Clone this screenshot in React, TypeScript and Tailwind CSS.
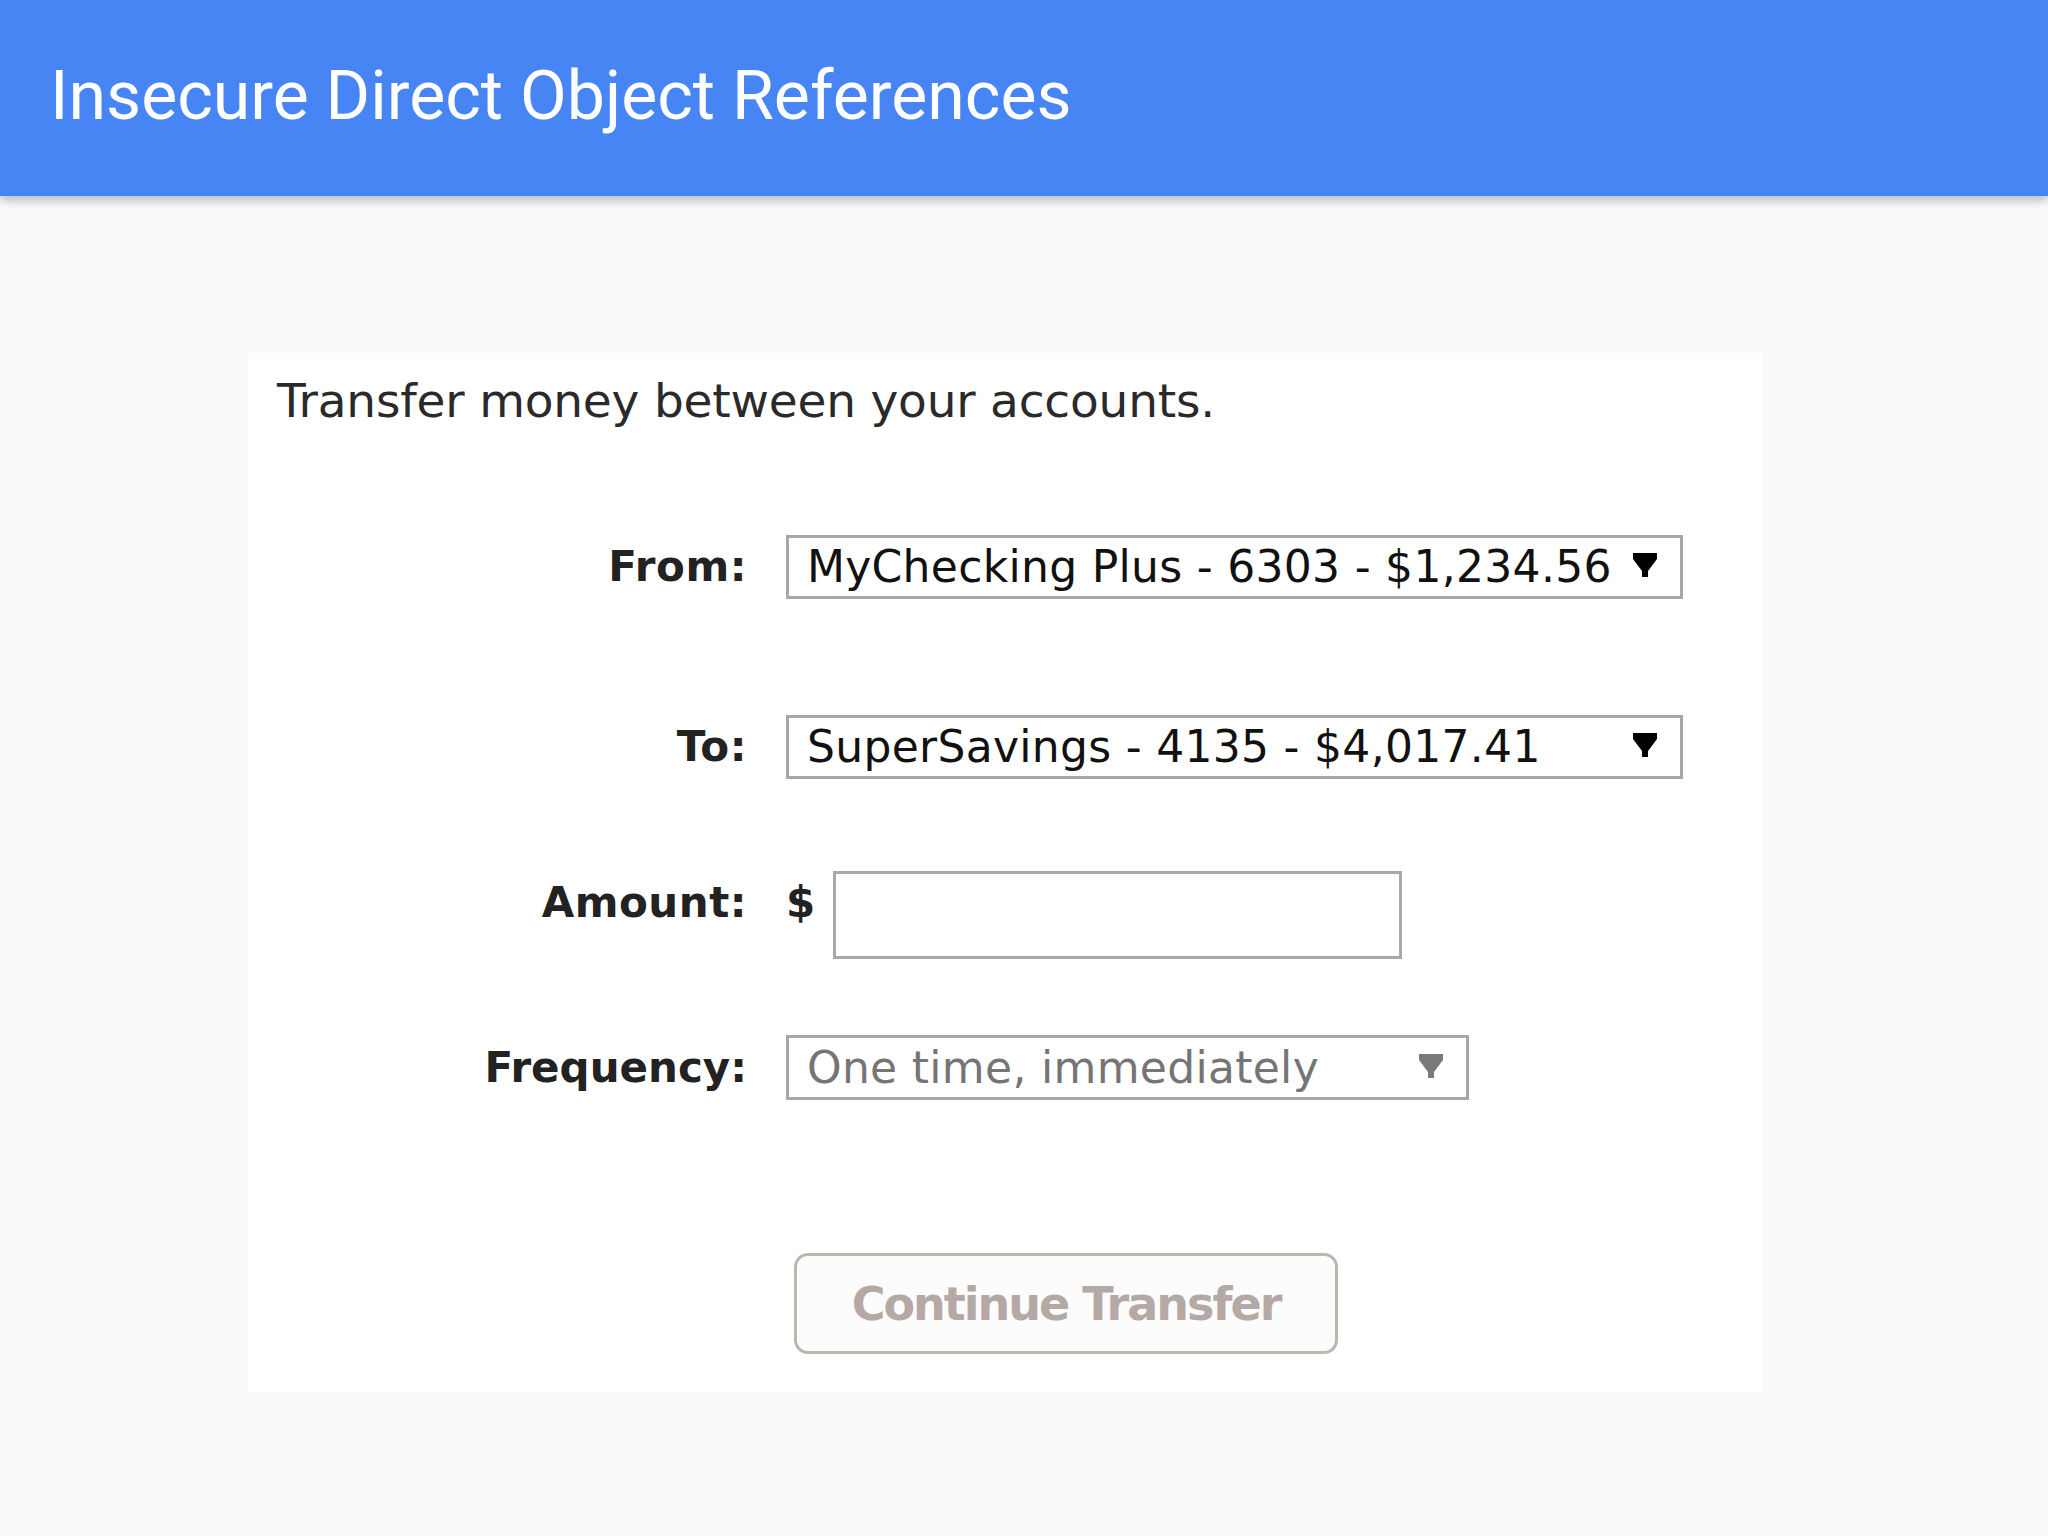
import React from "react";

function Arrow({ color }: { color: string }) {
  return (
    <svg width="24" height="24" viewBox="0 0 24 24" className="shrink-0 mb-[4px]">
      <polygon points="0,0 24,0 24,6 15,18 15,24 9,24 9,18 0,6" fill={color} />
    </svg>
  );
}

function FakeSelect({
  text,
  width,
  textColor,
  arrowColor,
}: {
  text: string;
  width: string;
  textColor: string;
  arrowColor: string;
}) {
  return (
    <div
      className={`${width} h-[64px] flex items-center justify-between bg-white border-[3px] border-[#a7a7a7] pl-[18px] pr-[23px]`}
    >
      <span className={`${textColor} text-[44px] leading-none tracking-[0.3px] whitespace-nowrap`}>{text}</span>
      <Arrow color={arrowColor} />
    </div>
  );
}

export default function App() {
  return (
    <div className="min-h-screen bg-[#fafafc] flex flex-col">
      <header className="relative z-10 h-[196px] bg-[#4685f3] flex items-center pl-[50px] pb-[4px] shadow-[0_4px_10px_rgba(0,0,0,0.28)]">
        <h1
          className="text-white text-[68px] leading-none font-normal"
          style={{ fontFamily: "Roboto, 'Liberation Sans', sans-serif" }}
        >
          Insecure Direct Object References
        </h1>
      </header>

      <main className="pt-[157px] pl-[248px]">
        <section
          className="w-[1514px] h-[1039px] bg-white pt-[24px] pl-[29px]"
          style={{ fontFamily: "'DejaVu Sans', Verdana, sans-serif" }}
        >
          <p className="text-[47px] leading-none tracking-[-0.2px] text-[#2a2a2a]">
            Transfer money between your accounts.
          </p>

          <div className="flex flex-col mt-[111px]">
            <div className="flex items-center">
              <div className="w-[470px] text-right text-[42px] leading-none font-bold tracking-[0.5px] text-[#222]">
                From:
              </div>
              <div className="ml-[39px]">
                <FakeSelect
                  text="MyChecking Plus - 6303 - $1,234.56"
                  width="w-[897px]"
                  textColor="text-[#111]"
                  arrowColor="#000"
                />
              </div>
            </div>

            <div className="flex items-center mt-[116px]">
              <div className="w-[470px] text-right text-[42px] leading-none font-bold tracking-[0.5px] text-[#222]">
                To:
              </div>
              <div className="ml-[39px]">
                <FakeSelect
                  text="SuperSavings - 4135 - $4,017.41"
                  width="w-[897px]"
                  textColor="text-[#111]"
                  arrowColor="#000"
                />
              </div>
            </div>

            <div className="flex items-start mt-[92px]">
              <div className="w-[470px] mt-[11px] text-right text-[42px] leading-none font-bold tracking-[0.5px] text-[#222]">
                Amount:
              </div>
              <div className="ml-[39px] flex items-start">
                <span className="mt-[11px] text-[42px] leading-none font-bold text-[#222] w-[47px]">$</span>
                <input
                  type="text"
                  className="w-[569px] h-[88px] bg-white border-[3px] border-[#a9a9a9] outline-none"
                />
              </div>
            </div>

            <div className="flex items-center mt-[76px]">
              <div className="w-[470px] text-right text-[42px] leading-none font-bold text-[#222]">
                Frequency:
              </div>
              <div className="ml-[39px]">
                <FakeSelect
                  text="One time, immediately"
                  width="w-[683px] h-[65px]"
                  textColor="text-[#757575]"
                  arrowColor="#7a7a7a"
                />
              </div>
            </div>

            <div className="flex mt-[153px]">
              <div className="w-[470px]" />
              <div className="ml-[47px]">
                <button
                  type="button"
                  className="w-[544px] h-[101px] rounded-[14px] border-[3px] border-[#bdb6ad] bg-[#fdfcfd] text-[#b4a9a4] text-[46px] leading-none font-bold tracking-[-2px] flex items-center justify-center"
                  style={{ fontFamily: "'DejaVu Sans', Verdana, sans-serif" }}
                >
                  Continue Transfer
                </button>
              </div>
            </div>
          </div>
        </section>
      </main>
    </div>
  );
}
